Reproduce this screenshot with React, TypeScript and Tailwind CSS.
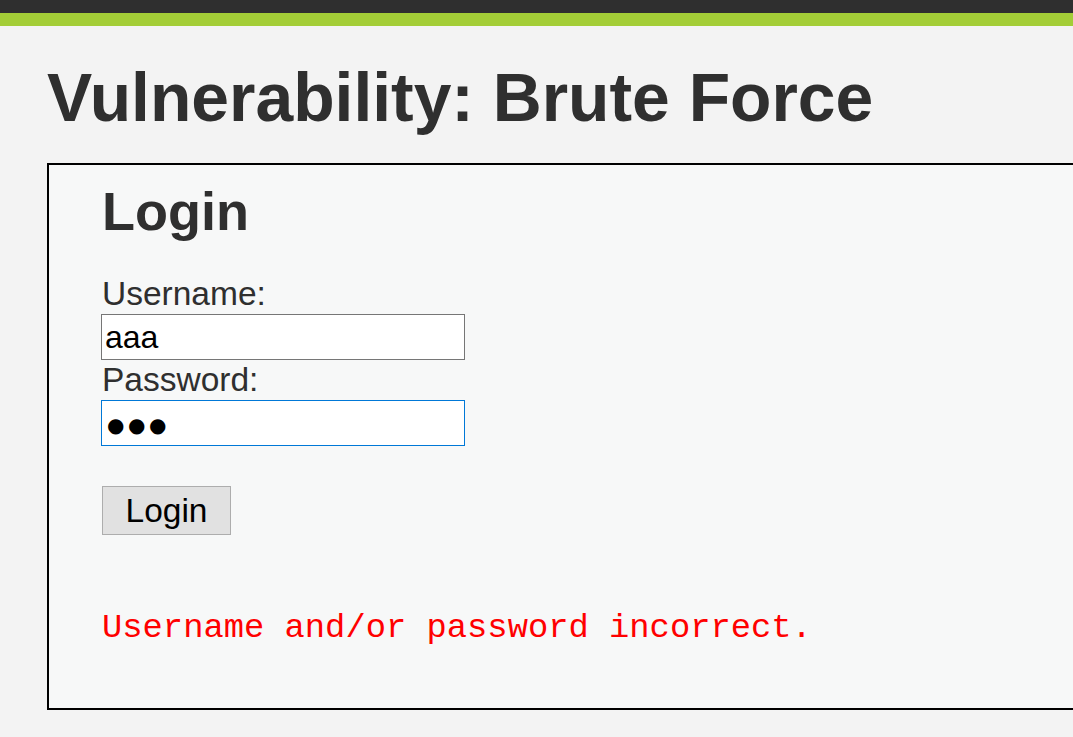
export default function App() {
  return (
    <div className="min-h-[737px] overflow-hidden bg-[#f3f3f3] font-['Liberation_Sans',Arial,sans-serif] text-[#2f2f2f]">
      <div className="h-[13px] bg-[#2f2f2f]" />
      <div className="h-[13px] bg-[#a3cd37]" />

      <div className="pl-[47px]">
        <h1 className="mt-[38px] text-[67.8px] font-bold leading-none">
          Vulnerability: Brute Force
        </h1>

        <div className="mt-[31px] w-[1100px] border-2 border-black bg-[#f7f8f8] pb-[62px] pl-[53px] pt-[19px]">
          <h2 className="text-[54px] font-bold leading-none">Login</h2>

          <form className="mt-[36px]" onSubmit={(e) => e.preventDefault()}>
            <label className="block text-[33.5px] leading-[40px]">Username:</label>
            <input
              type="text"
              defaultValue="aaa"
              className="-ml-[1px] block h-[46px] w-[364px] border border-[#767676] bg-white px-[3px] text-[32px] text-black outline-none"
            />
            <label className="block text-[33.5px] leading-[40px]">Password:</label>
            <input
              type="text"
              defaultValue="●●●"
              className="-ml-[1px] block h-[46px] w-[364px] border border-[#0078d7] bg-white pl-[5px] pr-[3px] pt-[4px] font-['DejaVu_Sans',sans-serif] text-[20px] tracking-[3.5px] text-black outline-none"
            />
            <button
              type="submit"
              className="mt-[40px] block h-[49px] w-[129px] border border-[#adadad] bg-[#e1e1e1] text-[33.5px] leading-none text-black"
            >
              Login
            </button>
          </form>

          <p className="mt-[77px] font-['Liberation_Mono','Courier_New',monospace] text-[33.8px] leading-none text-[#ff0000]">
            Username and/or password incorrect.
          </p>
        </div>
      </div>
    </div>
  );
}
